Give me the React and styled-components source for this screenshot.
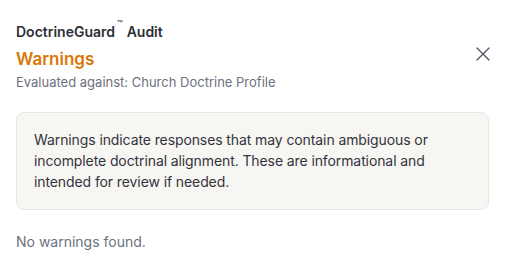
import React from 'react'
import styled, { createGlobalStyle } from 'styled-components'
import { X } from 'lucide-react'

const GlobalStyle = createGlobalStyle`
  body {
    margin: 0;
    background: #ffffff;
    font-family: Inter, "Noto Sans", sans-serif;
  }
`

const Panel = styled.div`
  padding: 17px 17px 0 16px;
  display: flex;
  flex-direction: column;
`

const Header = styled.div`
  display: flex;
  align-items: center;
  justify-content: space-between;
`

const HeaderText = styled.div`
  display: flex;
  flex-direction: column;
`

const Brand = styled.div`
  font-size: 14px;
  font-weight: 600;
  line-height: 22px;
  color: #2e2e36;
  sup {
    font-size: 9px;
    font-weight: 500;
    margin: 0 4px 0 2px;
    position: relative;
    top: -4px;
  }
`

const Title = styled.h2`
  margin: 4px 0 0;
  font-size: 17px;
  font-weight: 600;
  line-height: 24px;
  color: #d97706;
`

const Subtitle = styled.p`
  margin: 2px 0 0;
  font-size: 13px;
  line-height: 18px;
  color: #6b7280;
`

const CloseButton = styled.button`
  border: none;
  background: none;
  padding: 0;
  margin-right: -6px;
  color: #50515e;
  display: flex;
  cursor: pointer;
`

const Notice = styled.div`
  margin-top: 21px;
  background: #f7f6f3;
  border: 1px solid #e8e6e1;
  border-radius: 8px;
  padding: 16px 18px 17px 17px;
  font-size: 14px;
  line-height: 21px;
  letter-spacing: -0.1px;
  color: #33343b;
`

const Empty = styled.p`
  margin: 22px 0 0;
  font-size: 14px;
  line-height: 20px;
  color: #6b7280;
`

export default function App() {
  return (
    <>
      <GlobalStyle />
      <Panel>
        <Header>
          <HeaderText>
            <Brand>DoctrineGuard<sup>™</sup>Audit</Brand>
            <Title>Warnings</Title>
            <Subtitle>Evaluated against: Church Doctrine Profile</Subtitle>
          </HeaderText>
          <CloseButton aria-label="Close">
            <X size={24} strokeWidth={1.25} />
          </CloseButton>
        </Header>
        <Notice>
          Warnings indicate responses that may contain ambiguous or incomplete
          doctrinal alignment. These are informational and intended for review
          if needed.
        </Notice>
        <Empty>No warnings found.</Empty>
      </Panel>
    </>
  )
}
